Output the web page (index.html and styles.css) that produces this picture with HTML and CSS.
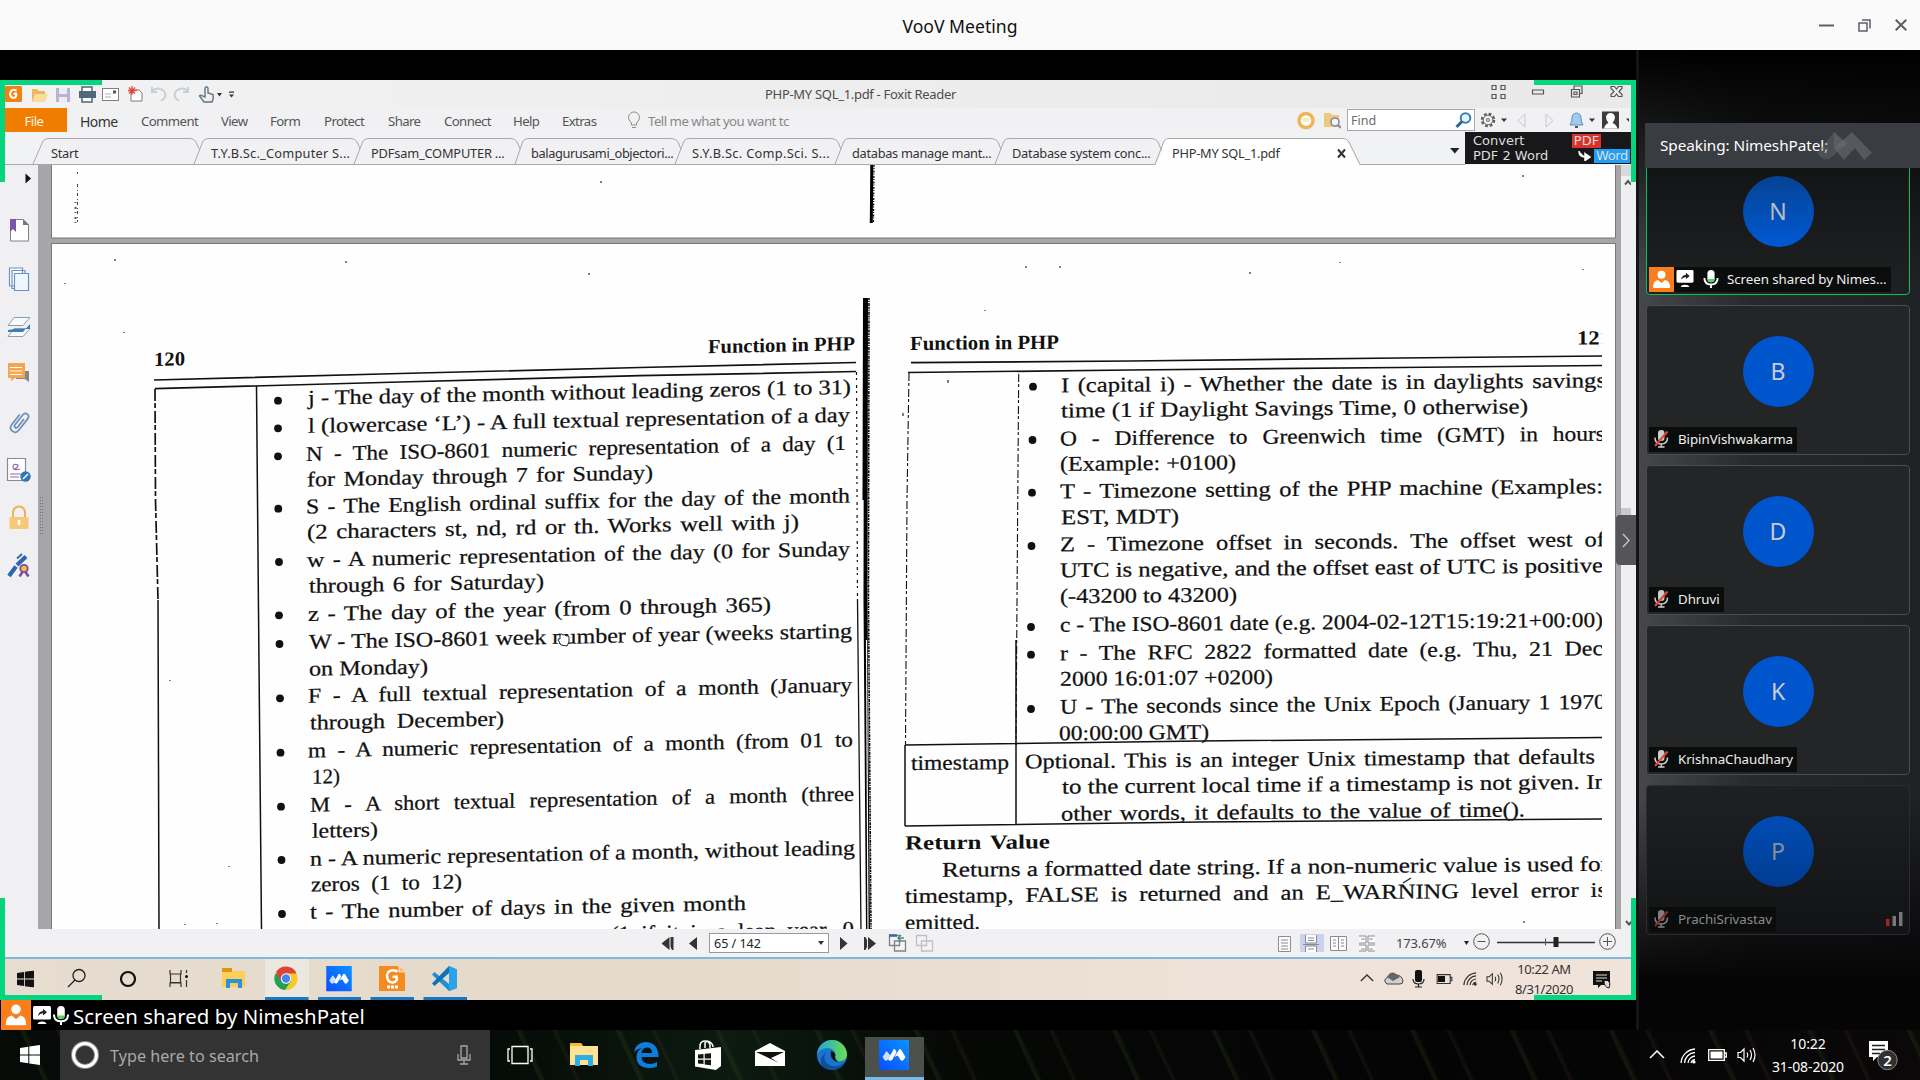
FILE: index.html
```html
<!DOCTYPE html>
<html lang="en">
<head>
<meta charset="utf-8">
<title>VooV Meeting</title>
<link rel="stylesheet" href="styles.css">
</head>
<body>
<svg class="defs" width="0" height="0" aria-hidden="true">
  <defs>
    <linearGradient id="voovBg" x1="0" y1="1" x2="1" y2="0"><stop offset="0" stop-color="#0a4dff"/><stop offset="1" stop-color="#0a93ff"/></linearGradient>
    <linearGradient id="edgeA" x1="0" y1="0" x2="1" y2="0"><stop offset="0" stop-color="#1fa3e0"/><stop offset="1" stop-color="#6ddf4b"/></linearGradient>
    <symbol id="voov" viewBox="0 0 30 30"><rect width="30" height="30" fill="url(#voovBg)"/><path d="M3.500 17 L7.500 11 L11.500 15.500 L8.500 20 Q7 21.500 5.500 20 Z" fill="#fff" opacity=".8"/><path d="M9 19.500 L14.500 9.500 Q15.500 8.500 16.500 10 L17.500 12.500 L13 20 Q11 21.500 9 19.500Z" fill="#fff"/><path d="M15.500 17 L20 9.500 Q21 8.500 22 9.500 L26.500 17 L24.500 20 Q23 21.500 21.500 20 L18.800 15.500Z" fill="#fff"/></symbol>
    <symbol id="person" viewBox="0 0 25 25"><rect width="25" height="25" fill="#fb7d1b"/><circle cx="12.500" cy="7.800" r="4" fill="#fff"/><path d="M4 21 Q4 13.500 9 13 L12.500 16 L16 13 Q21 13.500 21 21Z" fill="#fff"/></symbol>
    <symbol id="share" viewBox="0 0 18 19"><rect y="0" width="18" height="13.500" rx="1.500" fill="#fff"/><path d="M5 10 Q5.500 5.500 10 5 V2.800 L14 6.300 L10 9.500 V7.300 Q7 7.300 5 10Z" fill="#222"/><path d="M4.500 18 Q5 15.500 9 15.500 T13.500 18Z" fill="#fff"/></symbol>
    <symbol id="mic" viewBox="0 0 16 19"><rect x="4.200" y="0" width="7.600" height="13" rx="3.800" fill="#fff"/><path d="M4.200 9.500 H11.800 A3.800 3.500 0 0 1 4.200 9.500Z" fill="#5bd75b"/><path d="M1 8.500 Q1 15.300 8 15.300 T15 8.500 M8 15.300 V19" fill="none" stroke="#fff" stroke-width="2"/></symbol>
    <symbol id="muted" viewBox="0 0 17 18"><rect x="5" y="0" width="6.500" height="11" rx="3.200" fill="#ccc"/><path d="M2 7.500 Q2 14 8.200 14 T14.500 7.500 M8.200 14 V17 M5 17 H11.500" fill="none" stroke="#ccc" stroke-width="1.500"/><path d="M2 16 L14.500 1.500" stroke="#e0463c" stroke-width="2"/></symbol>
    <symbol id="win" viewBox="0 0 20 20"><path d="M0 3 L8.300 1.800 V9.500 H0Z M9.300 1.600 L20 0 V9.500 H9.300Z M0 10.500 H8.300 V18.200 L0 17Z M9.300 10.500 H20 V20 L9.300 18.400Z" fill="currentColor"/></symbol>
    <symbol id="wifi" viewBox="0 0 16 16"><g fill="none" stroke="currentColor" stroke-width="1.300"><path d="M1 15 A15 15 0 0 1 15 1"/><path d="M4.500 15 A11 11 0 0 1 15 4.500"/><path d="M8 15 A8 8 0 0 1 15 8"/><path d="M11 15 A5 5 0 0 1 15 11.500"/></g><circle cx="14" cy="14" r="1.600" fill="currentColor"/></symbol>
    <symbol id="battery" viewBox="0 0 19 12"><path d="M.700 .700 H16.300 V11.300 H.700Z M16.300 4 H18.300 V8 H16.300" fill="none" stroke="currentColor" stroke-width="1.300"/></symbol>
    <symbol id="speaker" viewBox="0 0 20 18"><path d="M1 6.500 H3.500 L7 3 V15 L3.500 11.500 H1Z M10 6.500 Q11.500 9 10 11.500 M13 4 Q16 9 13 14 M16 2 Q20 9 16 16" fill="none" stroke="currentColor" stroke-width="1.200"/></symbol>
    <symbol id="caret" viewBox="0 0 16 9"><path d="M1 8 L8 1 L15 8" fill="none" stroke="currentColor" stroke-width="1.500"/></symbol>
    <symbol id="down" viewBox="0 0 6 4"><path d="M0 0 H6 L3 4Z" fill="#333"/></symbol>
  </defs>
</svg>

<header class="titlebar">
  <h1>VooV Meeting</h1>
  <div class="winbtns">
    <svg width="15" height="15" viewBox="0 0 15 15"><path d="M0 7.500 H15" stroke="#5c6066" stroke-width="2"/></svg>
    <svg width="13" height="13" viewBox="0 0 13 13" fill="none" stroke="#5c6066" stroke-width="1.500"><path d="M1 4 H9 V12 H1Z M4 1 H12 V9.500"/></svg>
    <svg width="12" height="12" viewBox="0 0 12 12"><path d="M.700 .700 L11.300 11.300 M11.300 .700 L.700 11.300" stroke="#5c6066" stroke-width="2"/></svg>
  </div>
</header>

<main class="meeting">
  <section class="stage">
    <div class="shared">
      <div class="foxtitle">
        <svg width="245" height="28" viewBox="0 80 245 28">
          <rect x="5" y="86" width="17" height="16" rx="1" fill="#f08214"/><path d="M16.500 90.500 Q11 88 10 94 Q11 99 15 97.500 Q17 96 16 93.500 L13.500 94" fill="none" stroke="#fff" stroke-width="2"/>
          <path d="M32 89 h5 l2 2 h6 v10 H32Z" fill="#e9b861"/><path d="M35 94 H48 L45 102 H32Z" fill="#fbdc9c"/>
          <path d="M56 88 H70 V102 H56Z" fill="#b9b3cf"/><path d="M59 88 h8 v6 h-8Z M59 97 h8 v5 h-8Z" fill="#eeecf3"/>
          <path d="M82 87 h10 v5 h-10Z M82 96 h10 v6 h-10Z" fill="#fff" stroke="#4e6577" stroke-width="1.500"/><rect x="79" y="91" width="17" height="7" fill="#52677a"/>
          <rect x="102.500" y="88.500" width="16" height="12" fill="#fff" stroke="#7a8288"/><path d="M105 94 h6 M105 97 h6" stroke="#aaa"/><rect x="113" y="90.500" width="3" height="3" fill="#555"/>
          <path d="M133 90 H139 L142 93 V101 H131 V92" fill="#fff" stroke="#7d7d7d"/><path d="M132 86 v9 M128 90.500 h9 M129 87.500 l6 6 M135 87.500 l-6 6" stroke="#e3493c" stroke-width="1.300"/>
          <path d="M152 91 Q158 86 164 91 Q168 97 161 101 M152 87 v5 h5" fill="none" stroke="#c3cfd9" stroke-width="2"/>
          <path d="M188 91 Q182 86 176 91 Q172 97 179 101 M188 87 v5 h-5" fill="none" stroke="#c3cfd9" stroke-width="2"/>
          <path d="M205 97 V88 q1.500-2.500 3 0 V93 l5 1.500 q1 3-1 7.500 H204 L199.500 96 q1-1.500 3 0Z" fill="#eef1f3" stroke="#64727d" stroke-width="1.400"/>
          <path d="M217 93 h5 l-2.500 3.500Z M229 91.500 h5 v1.200 h-5Z M229 94.500 h5 l-2.500 3Z" fill="#333"/>
        </svg>
        <span class="doctitle">PHP-MY SQL_1.pdf - Foxit Reader</span>
        <svg width="134" height="28" viewBox="1490 80 134 28" fill="none" stroke="#555" stroke-width="1.200">
          <path d="M1492 85.500h4v4h-4Z M1501 85.500h4v4h-4Z M1492 94.500h4v4h-4Z M1501 94.500h4v4h-4Z"/>
          <path d="M1532.500 90 h11 v4 h-11Z"/><path d="M1571.500 89.500 h8 v7.500 h-8Z M1574 89 v-3 h8 v7.500 h-2 M1574 92 h3 v2.500 h-3Z"/>
          <path d="M1611 86.500 h3.500 l2 2.500 2-2.500 h3.500 v2 l-3 3 3 3 v2 h-3.500 l-2-2.500 -2 2.500 h-3.500 v-2 l3-3 -3-3Z"/>
        </svg>
      </div>

      <nav class="ribbon">
        <b class="file">File</b><span class="home">Home</span><span>Comment</span><span>View</span><span>Form</span><span>Protect</span><span>Share</span><span>Connect</span><span>Help</span><span>Extras</span>
        <svg width="14" height="18" viewBox="0 0 14 18" fill="none" stroke="#8b8b8b"><path d="M4.500 12 Q1 9 1.500 5.500 Q3 1 7 1 T12.500 5.500 Q13 9 9.500 12 V14 H4.500Z M5 16.500 h4"/></svg>
        <span class="tell">Tell me what you want tc</span>
        <svg width="44" height="20" viewBox="1297 110 44 20"><circle cx="1306" cy="120.500" r="7" fill="#fff" stroke="#edb553" stroke-width="3.500"/><path d="M1302 119h8M1303 121h6" stroke="#f0cf98"/><path d="M1324 113 h6 l2 2 h7 v12 H1324Z" fill="#eec87e"/><circle cx="1335" cy="122" r="4" fill="#f3f3f3" stroke="#848c94" stroke-width="1.600"/><path d="M1338 125 l3 3" stroke="#848c94" stroke-width="2"/></svg>
        <div class="find"><span>Find</span><svg width="17" height="17" viewBox="0 0 17 17"><circle cx="10.500" cy="6" r="4.800" fill="#e8f5fb" stroke="#2f83b5" stroke-width="2"/><path d="M7 9.500 L1.500 15" stroke="#2b6690" stroke-width="3"/></svg></div>
        <svg width="150" height="24" viewBox="1479 108 150 24">
          <circle cx="1488" cy="120" r="6" fill="none" stroke="#5a5a5a" stroke-width="2.500" stroke-dasharray="2.700 2"/><circle cx="1488" cy="120" r="4.800" fill="#f1f1f2" stroke="#666"/><circle cx="1488" cy="120" r="1.500" fill="none" stroke="#666"/>
          <path d="M1501 118.500h6l-3 3.500Z M1589 118.500h6l-3 3.500Z M1626 118.500h6l-3 3.500Z" fill="#333"/>
          <path d="M1525 114 V127 L1518 120.500Z M1546 114 V127 L1553 120.500Z" fill="none" stroke="#c8c8c8"/>
          <path d="M1570 125 Q1572 122 1572 118 Q1572 113.500 1576.500 113 Q1581 113.500 1581 118 Q1581 122 1583 125Z" fill="#9fcbf3" stroke="#5b8fbe"/><path d="M1575 127h3" stroke="#456" stroke-width="2"/>
          <rect x="1602" y="111.500" width="17" height="17" fill="#3c3c3e"/><path d="M1604 128.500 Q1605 124 1608.500 123 Q1606 120 1606 117 Q1607 113 1610.500 113 T1615 117 Q1615 120 1612.500 123 Q1616 124 1617.500 128.500Z" fill="#fff"/>
        </svg>
      </nav>

      <div class="tabs">
        <svg class="tabshapes" width="1465" height="33" viewBox="0 132 1465 33">
          <g fill="#f1f1f3" stroke="#a9a9ac"><path d="M33 164 L43 141 Q45 138.500 48 138.500 H190 Q194 138.500 196 142 L206 164"/><path d="M194 164 L203 141 Q205 138.500 208 138.500 H351 Q355 138.500 357 142 L367 164"/><path d="M354 164 L363 141 Q365 138.500 368 138.500 H511 Q515 138.500 517 142 L527 164"/><path d="M515 164 L523 141 Q525 138.500 528 138.500 H671 Q676 138.500 678 142 L687 164"/><path d="M675 164 L684 141 Q686 138.500 689 138.500 H831 Q836 138.500 838 142 L847 164"/><path d="M835 164 L844 141 Q846 138.500 849 138.500 H991 Q996 138.500 998 142 L1007 164"/><path d="M995 164 L1004 141 Q1006 138.500 1009 138.500 H1152 Q1156 138.500 1158 142 L1167 164"/></g>
          <path d="M0 164.500 H1155 L1164 141 Q1166 138.500 1169 138.500 H1342 Q1347 138.500 1349 142 L1360 164.500 H1465" fill="none" stroke="#a9a9ac"/><path d="M1156 166 L1165 141 Q1167 139 1169 139 H1342 Q1346 139 1348 142 L1359 166Z" fill="#fff"/>
          <path d="M1338 149.500 l7 8 M1345 149.500 l-7 8" stroke="#333" stroke-width="2"/><path d="M1450 148 h9.500 l-4.700 5.500Z" fill="#222"/>
        </svg>
        <span>Start</span><span>T.Y.B.Sc._Computer S...</span><span>PDFsam_COMPUTER ...</span><span>balagurusami_objectori...</span><span>S.Y.B.Sc. Comp.Sci. S...</span><span>databas manage mant...</span><span>Database system conc...</span><span>PHP-MY SQL_1.pdf</span>
        <div class="promo"><div>Convert<br>PDF 2 Word</div><div class="promoR"><em>PDF</em><p><svg width="13" height="10" viewBox="0 0 13 10"><path d="M1 0 Q1 6 7 6 M7 2.500 L12 6 L7 9.500Z" fill="#fff" stroke="#fff" stroke-width="1.500"/></svg><i>Word</i></p></div></div>
      </div>

      <div class="reader">
        <aside class="tools">
          <svg width="38" height="764" viewBox="0 165 38 764">
            <path d="M25.500 173.500 L31 178.500 L25.500 183.500Z" fill="#111"/>
            <path d="M10.500 219.500 H23 L28.500 225 V241 H10.500Z" fill="#fff" stroke="#7f8288"/><path d="M23 219 v6 h6Z" fill="#777"/><path d="M10 219 h6 v13 l-3-3 -3 3Z" fill="#7958a8"/>
            <g fill="#fff" stroke="#6b93c0" stroke-width="1.200"><path d="M9.500 268 h13 v18 h-13Z M12 270.500 h13 v18 h-13Z"/><path d="M14.500 273.500 h14 v17 h-14Z" fill="#eef7ff"/></g>
            <path d="M14 328.500 h16 l-7 8 h-15Z" fill="#f8fbfd" stroke="#8aa0b0"/><path d="M8 330 l7-1 h15 v-5 l-7 8 h-15Z" fill="#3f7db3"/><path d="M14 317.500 h16 l-7 8 h-15Z" fill="#f8fbfd" stroke="#8aa0b0"/>
            <path d="M24 371 h5 v11 l-4-3 h-9 v-3 h9Z" fill="#85858a"/><path d="M8 363 h17 v15 h-10 l-4 3 v-3 h-3Z" fill="#f5a64e"/><path d="M10 367.500 h12 M10 371 h12 M10 374.500 h12" stroke="#fff"/>
            <g transform="rotate(38 19.500 422)" fill="none" stroke="#6b8fb8" stroke-width="1.700"><path d="M15 416 V429 Q15 433.500 19.500 433.500 T24 429 V414.500 Q24 411 20.800 411 T17.700 414.500 V427 Q17.700 429 19.500 429 T21.200 427 V417"/></g>
            <path d="M7.500 458.500 h18 v22 h-18Z" fill="#fff" stroke="#8b8b8f" stroke-width="1.200"/><path d="M14 469 q4-1 4-4 q-5-2-5 2 q0 4 7 2 M10 474h11 M10 477h9" fill="none" stroke="#8c6fae" stroke-width="1.200"/><circle cx="25.500" cy="476.500" r="5.200" fill="#2f78b4"/><path d="M23 479 l5-5" stroke="#fff" stroke-width="1.500"/>
            <path d="M13 518 v-6 q1-5.500 6-5.500 t6 5.500 v6" fill="none" stroke="#eab45e" stroke-width="2"/><path d="M9.500 517 h19 v12 h-19Z" fill="#f7c877"/><path d="M19 520 v5" stroke="#fff" stroke-width="2.500"/>
            <path d="M9 576 L16 566.500 M17 565 L26 556.500" stroke="#2d65b0" stroke-width="4.200"/><path d="M17 558.500 l5-4.500" stroke="#2d65b0" stroke-width="1.800"/><path d="M22.500 572 l-3 4.500 M25.500 572 l3 4.500" stroke="#7b4aa0" stroke-width="2.500"/><circle cx="24" cy="568.500" r="3.700" fill="#f3c33c" stroke="#7b4aa0" stroke-width="1.800"/>
          </svg>
        </aside>
        <svg class="scan" width="1583" height="764" viewBox="38 165 1583 764">
          <defs><clipPath id="cut"><rect x="860" y="165" width="742" height="764"/></clipPath></defs>
          <rect x="38" y="165" width="1583" height="764" fill="#a6a6a8"/>
          <rect x="52" y="165" width="1563" height="73" fill="#fefefe"/><rect x="52" y="244" width="1563" height="685" fill="#fefefe"/>
          <path d="M51.500 165 V238 H1615.500 V165 M51.500 929 V243.500 H1615.500 V929" fill="none" stroke="#77777a"/>
          <path d="M42.500 497 v37 M40.500 497 v37" stroke="#77777a" stroke-dasharray="1 2"/>
          <path d="M77.500 172v2M77.500 184 V222" stroke="#444" stroke-dasharray="3 3 1 2"/><path d="M75.500 202 V223" stroke="#555" stroke-width="2" stroke-dasharray="1 4 2 3"/>
          <path d="M871.800 165 L871.300 223" stroke="#000" stroke-width="3"/><path d="M874 165 L873.500 223" stroke="#000" stroke-width="1.200" stroke-dasharray="2 1 1 1.500"/>
          <path d="M866 298 L865.500 600 L868 929" fill="none" stroke="#000" stroke-width="4"/><path d="M864.500 298 L864 500" stroke="#000" stroke-width="3"/><path d="M869 298 L868.500 600 L871 929" fill="none" stroke="#000" stroke-width="1.500" stroke-dasharray="2 .7 1.300 1 3 .8"/>
          <path d="M866.500 640 L868 929" stroke="#fff" stroke-width="1.200"/>
          <g fill="none" stroke="#111" stroke-width="1.700">
            <path d="M154 380 L400 373.500 L640 367.500 L856 362.500 M155 388.700 L400 382 L640 375.700 L856 371.500"/>
            <path d="M911 362.700 L1130 361 L1400 358 L1602 356 M908 372.500 L1130 370 L1400 367.500 L1602 365.500"/>
            <path d="M905 745 L1200 741 L1602 737.500 M905 826 L1200 822 L1602 819" stroke-width="1.500"/>
            <path d="M256.500 386 L258.500 610 L261.500 929 M158 600 L159 929 M905 745 V826 M1016 640 V825" stroke-width="1.500"/>
            <path d="M155 389 L155.500 500 L158 600" stroke-dasharray="12 2 5 3"/>
            <path d="M856.500 372 L857.500 600" stroke-width="1.200" stroke-dasharray="3 3 2 5"/><path d="M857.500 600 L861 929" stroke-width="1.300"/>
            <path d="M909 373 L907 500 L905.500 745 M1018.700 374 L1017 600 L1016 745" stroke-width="1.100" stroke-dasharray="8 2 3 3"/>
          </g>
          <path d="M115 259v2M346 261v2M601 181v2M589 273v2M65 283v1M124 332v1M1523 175v2M1026 266v2M1250 272v2M1060 266v2M903 413v3M948 380v3M185 924v1M217 923v1M170 680v1M229 866v1M1524 921v2M985 310v1M1340 262v1M1583 269v1" stroke="#555" stroke-width="1.500"/>
          <g fill="#111"><circle cx="278" cy="400.700" r="3.900"/><circle cx="278" cy="428.300" r="3.900"/><circle cx="278" cy="456.300" r="3.900"/><circle cx="278.300" cy="508.700" r="3.900"/><circle cx="279" cy="562" r="3.900"/><circle cx="279" cy="615.300" r="3.900"/><circle cx="279.500" cy="644" r="3.900"/><circle cx="280" cy="698.300" r="3.900"/><circle cx="280.500" cy="752.700" r="3.900"/><circle cx="281" cy="806.700" r="3.900"/><circle cx="281.500" cy="860" r="3.900"/><circle cx="282" cy="914" r="3.900"/>
          <circle cx="1033" cy="386.700" r="3.900"/><circle cx="1032.500" cy="440" r="3.900"/><circle cx="1032" cy="492.700" r="3.900"/><circle cx="1031.500" cy="546" r="3.900"/><circle cx="1031" cy="627" r="3.900"/><circle cx="1031" cy="654.700" r="3.900"/><circle cx="1031" cy="709" r="3.900"/></g>
          <g class="print" transform="matrix(1 -.0205 0 1 0 7.200)">
            <text class="hd" x="154" y="362" textLength="31" lengthAdjust="spacingAndGlyphs">120</text>
            <text class="hd" x="708" y="360.500" textLength="147" lengthAdjust="spacingAndGlyphs">Function in PHP</text>
            <text x="308" y="404" textLength="543" lengthAdjust="spacingAndGlyphs">j - The day of the month without leading zeros (1 to 31)</text>
            <text x="308" y="432" textLength="542" lengthAdjust="spacingAndGlyphs">l (lowercase ‘L’) - A full textual representation of a day</text>
            <text class="w6" x="306" y="460" textLength="540" lengthAdjust="spacingAndGlyphs">N - The ISO-8601 numeric representation of a day (1</text>
            <text class="w3" x="307" y="485.500" textLength="346" lengthAdjust="spacingAndGlyphs">for Monday through 7 for Sunday)</text>
            <text class="w3" x="306" y="512.700" textLength="544" lengthAdjust="spacingAndGlyphs">S - The English ordinal suffix for the day of the month</text>
            <text class="w3" x="307" y="538" textLength="492" lengthAdjust="spacingAndGlyphs">(2 characters st, nd, rd or th. Works well with j)</text>
            <text class="w3" x="307" y="566" textLength="543" lengthAdjust="spacingAndGlyphs">w - A numeric representation of the day (0 for Sunday</text>
            <text class="w3" x="309" y="592" textLength="235" lengthAdjust="spacingAndGlyphs">through 6 for Saturday)</text>
            <text class="w3" x="308" y="620" textLength="463" lengthAdjust="spacingAndGlyphs">z - The day of the year (from 0 through 365)</text>
            <text x="309" y="648" textLength="543" lengthAdjust="spacingAndGlyphs">W - The ISO-8601 week number of year (weeks starting</text>
            <text x="309" y="675" textLength="119" lengthAdjust="spacingAndGlyphs">on Monday)</text>
            <text class="w6" x="308" y="702" textLength="544" lengthAdjust="spacingAndGlyphs">F - A full textual representation of a month (January</text>
            <text class="w6" x="310" y="728.700" textLength="194" lengthAdjust="spacingAndGlyphs">through December)</text>
            <text class="w6" x="308" y="756.700" textLength="545" lengthAdjust="spacingAndGlyphs">m - A numeric representation of a month (from 01 to</text>
            <text x="312" y="783" textLength="28" lengthAdjust="spacingAndGlyphs">12)</text>
            <text class="w9" x="310" y="811" textLength="544" lengthAdjust="spacingAndGlyphs">M - A short textual representation of a month (three</text>
            <text x="312" y="837" textLength="66" lengthAdjust="spacingAndGlyphs">letters)</text>
            <text x="310" y="865" textLength="545" lengthAdjust="spacingAndGlyphs">n - A numeric representation of a month, without leading</text>
            <text class="w6" x="311" y="890.700" textLength="151" lengthAdjust="spacingAndGlyphs">zeros (1 to 12)</text>
            <text class="w3" x="310" y="918" textLength="436" lengthAdjust="spacingAndGlyphs">t - The number of days in the given month</text>
            <text class="w6" x="611" y="946" textLength="243" lengthAdjust="spacingAndGlyphs">(1 if it is a leap year, 0</text>
          </g>
          <g clip-path="url(#cut)"><g class="print" transform="matrix(1 -.009 0 1 0 9.700)">
            <text class="hd" x="910" y="348.500" textLength="149" lengthAdjust="spacingAndGlyphs">Function in PHP</text>
            <text class="hd" x="1577" y="349" textLength="34" lengthAdjust="spacingAndGlyphs">121</text>
            <text class="w3" x="1061" y="392" textLength="545" lengthAdjust="spacingAndGlyphs">I (capital i) - Whether the date is in daylights savings</text>
            <text x="1061" y="417.300" textLength="467" lengthAdjust="spacingAndGlyphs">time (1 if Daylight Savings Time, 0 otherwise)</text>
            <text class="w9" x="1060" y="445.300" textLength="545" lengthAdjust="spacingAndGlyphs">O - Difference to Greenwich time (GMT) in hours</text>
            <text x="1060" y="470.700" textLength="176" lengthAdjust="spacingAndGlyphs">(Example: +0100)</text>
            <text class="w3" x="1060" y="498" textLength="543" lengthAdjust="spacingAndGlyphs">T - Timezone setting of the PHP machine (Examples:</text>
            <text x="1061" y="524" textLength="118" lengthAdjust="spacingAndGlyphs">EST, MDT)</text>
            <text class="w6" x="1060" y="551" textLength="545" lengthAdjust="spacingAndGlyphs">Z - Timezone offset in seconds. The offset west of</text>
            <text x="1060" y="577" textLength="543" lengthAdjust="spacingAndGlyphs">UTC is negative, and the offset east of UTC is positive</text>
            <text x="1060" y="603" textLength="177" lengthAdjust="spacingAndGlyphs">(-43200 to 43200)</text>
            <text x="1060" y="631.500" textLength="543" lengthAdjust="spacingAndGlyphs">c - The ISO-8601 date (e.g. 2004-02-12T15:19:21+00:00)</text>
            <text class="w6" x="1060" y="660" textLength="543" lengthAdjust="spacingAndGlyphs">r - The RFC 2822 formatted date (e.g. Thu, 21 Dec</text>
            <text x="1060" y="685.700" textLength="213" lengthAdjust="spacingAndGlyphs">2000 16:01:07 +0200)</text>
            <text class="w3" x="1060" y="713.500" textLength="546" lengthAdjust="spacingAndGlyphs">U - The seconds since the Unix Epoch (January 1 1970</text>
            <text x="1059" y="740" textLength="150" lengthAdjust="spacingAndGlyphs">00:00:00 GMT)</text>
            <text x="911" y="768.500" textLength="98" lengthAdjust="spacingAndGlyphs">timestamp</text>
            <text class="w3" x="1025" y="768" textLength="570" lengthAdjust="spacingAndGlyphs">Optional. This is an integer Unix timestamp that defaults</text>
            <text x="1062" y="793.500" textLength="545" lengthAdjust="spacingAndGlyphs">to the current local time if a timestamp is not given. In</text>
            <text class="w3" x="1061" y="820.500" textLength="464" lengthAdjust="spacingAndGlyphs">other words, it defaults to the value of time().</text>
            <text class="hd w3" x="905" y="848" textLength="145" lengthAdjust="spacingAndGlyphs">Return Value</text>
            <text x="942" y="875.500" textLength="667" lengthAdjust="spacingAndGlyphs">Returns a formatted date string. If a non-numeric value is used for</text>
            <text class="w6" x="905" y="901.500" textLength="702" lengthAdjust="spacingAndGlyphs">timestamp, FALSE is returned and an E_WARNING level error is</text>
            <text x="905" y="928" textLength="75" lengthAdjust="spacingAndGlyphs">emitted.</text>
          </g></g>
          <path d="M1403 883 l8-5" stroke="#222" stroke-width="1.300"/>
          <path d="M561 645 l-3-5 q0-2 2-1 v-4 q2-2 3 0 q2-1 3 1 q3-1 3 1 v5 l-2 4Z" fill="#fff" stroke="#222" stroke-width="1"/>
        </svg>
        <div class="scroll"><svg width="10" height="764" viewBox="0 165 10 764"><rect width="10" height="11" y="165" fill="#d7d9dc"/><rect y="508" width="10" height="56" fill="#c9cacc"/><path d="M4 184.500 l3-3.500 3 3.500 M5 921 l3 3.500 3-3.500" fill="none" stroke="#555" stroke-width="2"/></svg></div>
      </div>

      <div class="status">
        <svg width="45" height="28" viewBox="657 929 45 28" fill="#333"><path d="M669.500 937 V950 L661.500 943.500Z M670.500 937h3v13h-1.500l-1.500-3Z M697 937 V950 L689 943.500Z"/></svg>
        <div class="pagebox"><span>65 / 142</span><svg width="6" height="4"><use href="#down"/></svg></div>
        <svg width="110" height="28" viewBox="831 929 110 28"><path d="M840 937 V950 L847.500 943.500Z M864 937h1.500l1.500 3v7l-1.500 3H864Z M868 937 V950 L876 943.500Z" fill="#333"/><g fill="#f3f3f5" stroke="#7d8288" stroke-width="1.300"><path d="M889.500 935.500h10v10h-10Z M894.500 941h11v10h-11Z"/><path stroke="#c0c0c4" d="M916.500 935.500h10v10h-10Z M921.500 941h11v10h-11Z"/></g><path d="M889 935.500h8" stroke="#3869a8" stroke-width="2.500"/><path d="M898 938h6m-3-3l-3 3 3 3" stroke="#4e8a86" fill="none" stroke-width="1.500"/></svg>
        <svg class="views" width="105" height="28" viewBox="1275 929 105 28" fill="#fdfdfd" stroke="#888c91"><rect x="1300" y="934" width="24" height="18" fill="#cdd1f0" stroke="none"/><path d="M1278.500 936.500h12v15h-12Z"/><path d="M1281 940h7M1281 943h7M1281 946h7M1281 949h7"/><path d="M1305.500 935v8h11v-8 M1305.500 952v-6h11v6 M1303 944.500h16 M1308 938h6 M1308 940.500h6 M1308 949h6"/><path d="M1330.500 936.500h8v14h-8Z M1338.500 936.500h8v14h-8Z M1333 940h3M1333 943h3M1333 946h3M1341 940h3M1341 943h3M1341 946h3"/><path d="M1359 936h7v7h-7 M1375 936h-7v7h7 M1359 951h7v-6h-7 M1375 951h-7v-6h7 M1361 939h4M1361 949h4M1369 939h4M1369 949h4"/></svg>
        <span class="zoomv">173.67%</span>
        <svg width="160" height="28" viewBox="1463 929 160 28" fill="none" stroke="#555"><path d="M1464 941h5l-2.500 4Z" fill="#222" stroke="none"/><circle cx="1481.500" cy="941.500" r="7.800"/><path d="M1477.500 941.500h8 M1603 941.500h9 M1607.500 937v9"/><circle cx="1607.500" cy="941.500" r="7.800"/><path d="M1497 942.500h98" stroke="#333" stroke-width="1.300"/><path d="M1545.500 938.500v7"/><rect x="1553.500" y="937" width="5" height="10" fill="#222" stroke="none"/></svg>
      </div>

      <div class="innerbar">
        <svg width="480" height="41" viewBox="0 959 480 41">
          <g color="#111"><use href="#win" x="17" y="970.500" width="17" height="17"/></g>
          <circle cx="79" cy="975.500" r="6" fill="none" stroke="#222" stroke-width="1.300"/><path d="M75 980 l-7 7" stroke="#222" stroke-width="1.300"/>
          <circle cx="128" cy="979" r="7" fill="none" stroke="#111" stroke-width="2.200"/>
          <path d="M170 970v4h11v-4 M170 987v-4h11v4 M170.500 974.500v8h10v-8 M186.500 970v3 M186.500 980v7" fill="none" stroke="#333" stroke-width="1.200"/><circle cx="186.500" cy="976.500" r="1.500" fill="#111"/>
          <path d="M222 969h9l2 2h12v16h-23Z" fill="#fccf58"/><path d="M222 968h10v4h-10Z" fill="#d9980f"/><path d="M226 979h16v9h-4v-5h-8v5h-4Z" fill="#2f8fdc"/>
          <rect x="265" y="959" width="44" height="38" fill="#ece7df"/>
          <circle cx="286" cy="978.500" r="11.500" fill="#f7c928"/><path d="M275.500 973.500 A11.500 11.500 0 0 0 285 990 L291 981Z" fill="#22a05b"/><path d="M276 972 A11.500 11.500 0 0 1 296.500 973.500 H286 L281 981Z" fill="#dd4437"/><circle cx="286" cy="978.500" r="5.200" fill="#fff"/><circle cx="286" cy="978.500" r="4.200" fill="#4484f3"/>
          <use href="#voov" x="326" y="966" width="26" height="25.500"/>
          <path d="M379 966h19l7 6v19h-26Z" fill="#f58a1f"/><path d="M399 966v6h6" fill="#f7b878" stroke="#fff" stroke-width=".700"/><path d="M397.500 971.500 Q389 968 387 975 Q387 983 393.500 982.500 Q398 981 396.500 976.500 L392.500 977" fill="none" stroke="#fff" stroke-width="2.500"/><path d="M387 987h11" stroke="#fff" stroke-width="3" stroke-dasharray="3 1"/>
          <path d="M449 966 L457 969.500 V988 L449 991 L434 976.500 L432 974.500 L434.500 972 L449 984Z" fill="#1f8fd4"/><path d="M449 966 V973 L434.500 986 L432 983.500Z" fill="#0d72b8"/><path d="M449 966 l8 3.500 V988 l-8 3Z" fill="#2aa3e8"/>
          <path d="M265 998.500h43.500M318 998.500h43M370.500 998.500h43.500M423.500 998.500h43.500" stroke="#1977c4" stroke-width="3"/>
        </svg>
        <div class="innertray">
          <svg width="150" height="41" viewBox="1358 959 150 41" color="#333"><use href="#caret" x="1360" y="974" width="14" height="8"/><path d="M1387 984 q-5-4 1-7 q3-6 8-2 q6 0 7 6 q0 3-3 3Z" fill="#cfcfd2" stroke="#444"/><path d="M1387 977 q4-7 9-3 l4 3 -7 4Z" fill="#666"/><rect x="1415" y="970" width="7" height="12" rx="2" fill="#111"/><path d="M1413 979q0 5 5.500 5t5.500-5M1418.500 984v3M1415 987h7" fill="none" stroke="#222" stroke-width="1.200"/><use href="#battery" x="1436" y="974" width="17" height="10"/><rect x="1438" y="976" width="7" height="6" fill="#111"/><use href="#wifi" x="1463" y="972" width="14" height="14"/><use href="#speaker" x="1486" y="971" width="18" height="16"/></svg>
          <time>10:22 AM<br>8/31/2020</time>
          <svg width="20" height="20" viewBox="0 0 20 20"><path d="M1 1h17v14h-9l-3 3v-3H1Z" fill="#111"/><path d="M4 5h11M4 8h11M4 11h6" stroke="#e6dccd"/><path d="M12 11q0 6 5 7q2-6-1-7" fill="#ddd" stroke="#111"/></svg>
        </div>
      </div>

      <i class="edge tl"></i><i class="edge tr"></i><i class="edge bl"></i><i class="edge br"></i>
      <button class="collapse" aria-label="Collapse panel"><svg width="8" height="15" viewBox="0 0 8 15"><path d="M1 1 L7 7.500 L1 14" fill="none" stroke="#c8c8c8" stroke-width="1.300"/></svg></button>
    </div>
    <div class="caption"><svg width="30" height="30"><use href="#person"/></svg><svg width="18" height="19"><use href="#share"/></svg><svg width="16" height="19"><use href="#mic"/></svg><span>Screen shared by NimeshPatel</span></div>
  </section>

  <aside class="people">
    <div class="speaking">Speaking: NimeshPatel;
      <svg class="ghost" width="56" height="30" viewBox="0 0 56 30"><path d="M0 22 L17 1 L31 12 L16 25 Q8 33 0 22Z" fill="#6a6d70" opacity=".4"/><path d="M17 1 L29 14 L17 16Z" fill="#75787c" opacity=".35"/><path d="M17 17 L35 1 L55 22 L47 29 L38 17 L27 29 Z" fill="#6d7075" opacity=".55"/></svg>
    </div>
    <article class="tile live"><b>N</b><footer><svg width="25" height="25"><use href="#person"/></svg><svg width="18" height="18"><use href="#share"/></svg><svg width="16" height="18"><use href="#mic"/></svg><span>Screen shared by Nimes...</span></footer></article>
    <article class="tile"><b>B</b><footer class="m"><svg width="17" height="18"><use href="#muted"/></svg><span>BipinVishwakarma</span></footer></article>
    <article class="tile"><b>D</b><footer class="m"><svg width="17" height="18"><use href="#muted"/></svg><span>Dhruvi</span></footer></article>
    <article class="tile"><b>K</b><footer class="m"><svg width="17" height="18"><use href="#muted"/></svg><span>KrishnaChaudhary</span></footer></article>
    <article class="tile dim"><b>P</b><footer class="m"><svg width="17" height="18"><use href="#muted"/></svg><span>PrachiSrivastav</span></footer><svg class="signal" width="17" height="14" viewBox="0 0 17 14"><rect y="7" width="3.500" height="7" fill="#a5231c"/><rect x="6.500" y="4" width="3.500" height="10" fill="#777"/><rect x="13" width="3.500" height="14" fill="#777"/></svg></article>
  </aside>
</main>

<footer class="taskbar">
  <svg class="start" width="20" height="20"><use href="#win"/></svg>
  <div class="search"><svg width="28" height="28" viewBox="0 0 28 28"><circle cx="14" cy="14" r="11.500" fill="none" stroke="#8b8b8b" stroke-width="5"/><circle cx="14" cy="14" r="11.500" fill="none" stroke="#fff" stroke-width="3"/></svg><span>Type here to search</span><svg width="14" height="20" viewBox="0 0 14 20" fill="none" stroke="#a9a9a9" stroke-width="1.300"><path d="M4 1h6v12H4Z M1 9v6h12V9 M7 15v4 M3 19h8"/></svg></div>
  <svg class="apps" width="434" height="50" viewBox="490 1030 434 50">
    <path d="M512 1046.500h16v17h-16Z M510 1049h-2v12h2 M530 1049h2v12h-2" fill="none" stroke="#fff" stroke-width="1.300"/>
    <path d="M570 1043h11l2 3h15v19h-28Z" fill="#ffe395"/><path d="M570 1043h11l2 3h-13Z" fill="#f5bd2e"/><path d="M575 1055h18v11h-5v-6h-8v6h-5Z" fill="#2faee4"/>
    <path d="M633.500 1053 Q636 1042 646 1042 Q658.500 1043 658.500 1057 H641.500 Q642 1064 650 1064 Q654 1064 657 1062 V1066.500 Q653 1068.500 648 1068 Q636 1067 636.500 1056 Q637 1050 642.500 1048 Q636 1049 633.500 1053Z M641.500 1053 H652 Q652 1047.500 647 1047.500 Q642 1048 641.500 1053Z" fill="#0f7ddb" fill-rule="evenodd"/>
    <path d="M695 1050 L721 1047 V1066 L716 1070 L695 1066.500Z" fill="#fff"/><path d="M700 1049v-4q1-4 5-4t5 4v3 M705 1048v-5q2-3 5-1t3 5" fill="none" stroke="#fff" stroke-width="1.500"/><path d="M698 1054.500l5.500-.5v4.500h-5.500Z M704.700 1053.800l6.300-.6v5.300h-6.300Z M698 1059.700h5.500v4.300l-5.500-.5Z M704.700 1059.700h6.300v5.500l-6.300-.8Z" fill="#10180f"/>
    <path d="M755 1051 L770 1043 L785 1051 V1066 H755Z" fill="#fff"/><path d="M757 1052 H784 L771 1058 L779 1063 L756 1052Z" fill="#0c120d"/>
    <circle cx="832" cy="1055" r="15" fill="#1c73cd"/><path d="M817 1055 A15 15 0 0 1 847 1055 Q846 1062 838 1061 Q833 1060 835 1056 Q836 1049 828 1048 Q820 1048 817 1055Z" fill="url(#edgeA)"/><path d="M826 1052 Q821 1062 832 1066 Q840 1067 845 1062 Q841 1070 832 1070 Q819 1069 821 1058Z" fill="#0d4f9b"/><path d="M831 1051 Q829 1060 838 1062 Q834 1058 835.500 1055 Q835 1052 831 1051Z" fill="#07160d"/>
    <rect x="865" y="1037" width="59" height="43" fill="#4b504a"/><rect x="865" y="1077" width="59" height="3" fill="#76b9ed"/><use href="#voov" x="879" y="1040" width="30" height="30"/>
  </svg>
  <svg class="tray" width="116" height="50" viewBox="1645 1030 116 50"><use href="#caret" x="1649" y="1050" width="16" height="9"/><use href="#wifi" x="1680" y="1048" width="16" height="16"/><use href="#battery" x="1708" y="1049" width="19" height="12"/><rect x="1710.500" y="1051.500" width="12" height="7" fill="#fff"/><use href="#speaker" x="1736" y="1046" width="22" height="18"/></svg>
  <time>10:22<br>31-08-2020</time>
  <svg class="notif" width="30" height="32" viewBox="0 0 30 32"><path d="M1 2h19v16H9l-4 4v-4H1Z" fill="#fff"/><path d="M4 6.500h13M4 10.500h13M4 14.500h8" stroke="#222" stroke-width="1.300"/><circle cx="19.500" cy="21" r="9.700" fill="#303030" stroke="#888"/><text x="19.500" y="26.500">2</text></svg>
</footer>
</body>
</html>
```
FILE: styles.css
```css
* { box-sizing: border-box; }
body { margin: 0; width: 1920px; height: 1080px; overflow: hidden; background: #000; font-family: "Noto Sans", sans-serif; display: flex; flex-direction: column; }
svg { display: block; flex: none; }
.defs { position: absolute; }
p { margin: 0; }

.titlebar { height: 50px; flex: none; background: #fafafa; display: grid; grid-template-columns: 1fr auto 1fr; align-items: center; }
.titlebar h1 { grid-column: 2; margin: 0; padding-top: 1px; font-size: 17.6px; line-height: 24px; font-weight: 400; color: #111; }
.winbtns { justify-self: end; display: flex; align-items: center; gap: 24px; padding-right: 13px; }

.meeting { flex: none; height: 980px; display: flex; }
.stage { width: 1639px; padding-top: 30px; flex: none; border-right: 3px solid #141416; background: #000; }
.shared { position: relative; width: 1636px; height: 920px; background: #f0f0f2; overflow: hidden; display: flex; flex-direction: column; }
.shared > * { flex: none; }

.foxtitle { height: 28px; display: grid; grid-template-columns: 765px 725px 134px; background: linear-gradient(90deg, #f2f2f2, #e9e9ea); }
.doctitle { font-size: 13px; line-height: 28px; color: #4c4c4c; letter-spacing: -.3px; white-space: nowrap; }

.ribbon { height: 24px; display: grid; grid-template-columns: 4px 76px 61px 80px 49px 54px 64px 56px 69px 49px 65px 21px 649px 50px 132px 1fr; align-items: center; font-size: 13.2px; color: #555; white-space: nowrap; background: #f1f1f3; }
.ribbon > span { letter-spacing: -.6px; padding-top: 2px; }
.ribbon .file { grid-column: 2; width: 63px; height: 24px; line-height: 27px; padding-right: 3px; text-align: center; font-weight: 400; letter-spacing: -.5px; background: #ee7d00; color: #fff3e4; }
.ribbon .home { color: #333; font-size: 14px; letter-spacing: -.6px; }
.ribbon .tell { color: #888; letter-spacing: -.5px; }
.find { width: 128px; height: 22px; background: #fff; border: 1px solid #a8a8ac; display: flex; align-items: center; justify-content: space-between; padding: 0 2px 0 3px; font-size: 12.5px; color: #6b6b6b; }

.tabs { height: 33px; display: grid; grid-template-columns: 51px 160px 160px 160px 161px 160px 160px 160px 293px 166px; grid-template-rows: 33px; font-size: 12.8px; color: #333; white-space: nowrap; background: #f1f2f3; }
.tabs span { grid-row: 1; line-height: 43px; letter-spacing: -.3px; }
.tabshapes { grid-row: 1; grid-column: 1 / 10; }
.tabs span:nth-of-type(1) { grid-column: 2; }
.tabs span:nth-of-type(2) { grid-column: 3; letter-spacing: .22px; }
.tabs span:nth-of-type(3) { grid-column: 4; letter-spacing: -.18px; }
.tabs span:nth-of-type(4) { grid-column: 5; letter-spacing: -.4px; }
.tabs span:nth-of-type(5) { grid-column: 6; letter-spacing: .3px; }
.tabs span:nth-of-type(6) { grid-column: 7; }
.tabs span:nth-of-type(7) { grid-column: 8; letter-spacing: -.25px; }
.tabs span:nth-of-type(8) { grid-column: 9; letter-spacing: -.25px; }
.promo { grid-column: 10; grid-row: 1; height: 32px; background: #18181a; color: #ddd; display: flex; justify-content: space-between; padding: 2px 1px 0 8px; font: 13px/14.5px "DejaVu Sans", sans-serif; }
.promo em, .promo i { display: block; font-style: normal; }
.promo em { background: #d8322b; width: 29px; height: 14px; text-align: center; }
.promoR p { display: flex; gap: 3px; margin: 1px 0 0 6px; align-items: center; }
.promo i { background: #1f9ff5; height: 14px; width: 36px; text-align: center; letter-spacing: -.4px; }

.reader { height: 764px; display: flex; }
.tools { width: 38px; background: #f0f0f2; }
.scroll { background: #eeeff1; flex: 1; }
.print text { font-family: "Liberation Serif", serif; font-size: 21px; fill: #111; stroke: #111; stroke-width: .25px; }
.print .hd { font-weight: 700; font-size: 20px; stroke: none; }
.print .w3 { word-spacing: 2px; }
.print .w6 { word-spacing: 5px; }
.print .w9 { word-spacing: 8px; }

.status { height: 30px; display: flex; padding-left: 657px; background: #f1f1f3; border-bottom: 2px solid #7fb9d9; }
.pagebox { margin: 4px 2px 0 7px; width: 120px; height: 20px; background: #fff; border: 1px solid #9a9a9e; display: flex; align-items: center; justify-content: space-between; padding: 0 4px; font-size: 12.5px; color: #222; }
.views { margin-left: 334px; }
.zoomv { width: 67px; margin-left: 16px; font-size: 13px; letter-spacing: -.15px; line-height: 28px; color: #444; }

.innerbar { height: 41px; display: flex; justify-content: space-between; background: linear-gradient(90deg, #e6ddd0, #e4dacb 40%, #efe2d8 75%, #f0e4da); }
.innertray { display: flex; align-items: center; width: 278px; }
.innertray time { width: 80px; margin: 0 5px 0 -4px; text-align: center; font-size: 13px; line-height: 19.500px; letter-spacing: -.4px; color: #333; }
.innertray > svg:last-child { margin-left: 3px; }

.edge { position: absolute; width: 102px; height: 102px; border: 0 solid #06d580; }
.tl { top: 0; left: 0; border-width: 5px 0 0 5px; }
.tr { top: 0; right: 0; border-width: 5px 5px 0 0; }
.bl { bottom: 0; left: 0; border-width: 0 0 5px 5px; }
.br { bottom: 0; right: 0; border-width: 0 5px 5px 0; }
.collapse { position: absolute; right: 0; top: 435px; width: 20px; height: 50px; border: 0; padding: 0 0 0 6px; border-radius: 4px 0 0 4px; background: #555557; display: flex; align-items: center; }

.caption { height: 30px; display: flex; align-items: center; gap: 2px; color: #fff; font-size: 20.4px; line-height: 30px; letter-spacing: .05px; white-space: nowrap; padding-left: 1px; }
.caption span { margin-left: 2px; padding-top: 2px; }

.people { position: relative; flex: 1; padding: 95px 10px 0 7px; display: flex; flex-direction: column; gap: 10.500px; background: linear-gradient(#000 0, transparent 24%, transparent 76%, #050506 95%), linear-gradient(90deg, #45474b, #28292c 40%, #202124); }
.speaking { position: absolute; left: 6px; top: 73px; width: 275px; height: 45px; padding-left: 15px; background: #393c41; color: #fff; font-size: 15.3px; line-height: 45px; z-index: 1; letter-spacing: -.05px; }
.ghost { position: absolute; left: 172px; top: 8px; }
.tile { position: relative; flex: none; height: 149.500px; border: 1px solid #4c4d50; border-radius: 4px; background: #242527; display: flex; flex-direction: column; align-items: center; justify-content: space-between; padding: 30px 2px 2px; }
.tile.live { border-color: #0abf5b; background: linear-gradient(#101214, #202123); }
.tile.dim { background: linear-gradient(#1f2022, #121315); border-color: #2b2c2e; }
.tile b { width: 71px; height: 71px; border-radius: 50%; background: #0055cc; color: #c9ccd2; font-size: 23px; font-weight: 400; line-height: 71px; text-align: center; }
.tile.live b { background: linear-gradient(#054393, #0059d4); color: #b9bcc2; }
.tile.dim b { background: linear-gradient(#004cb4, #003c92); color: #8b8f96; }
.tile footer { align-self: flex-start; height: 25px; background: #0b0c0c; display: flex; align-items: center; gap: 2px; padding-right: 5px; color: #eee; font-size: 13.3px; letter-spacing: -.05px; }
.tile footer svg + span { margin-left: 6px; }
.live footer svg:nth-child(3) { margin-left: 7px; }
.tile footer.m { padding: 0 4px; }
.tile.dim footer { color: #8a8a8a; }
.dim footer svg { opacity: .6; }
.signal { position: absolute; right: 6px; bottom: 8px; }

.taskbar { flex: none; height: 50px; display: flex; align-items: center; color: #fff; background:
  repeating-linear-gradient(65deg, transparent 0 38px, rgba(60,90,40,.2) 40px 42px, transparent 45px 71px, rgba(90,60,40,.18) 73px 74px, transparent 77px 90px),
  linear-gradient(90deg, #060b07, #050a06 25%, #0c1a10 38%, #060806 50%, #040404 75%, #0a0808); }
.start { margin: 0 20px; }
.search { width: 430px; height: 50px; background: #333; display: flex; align-items: center; padding: 0 19px 0 11px; color: #a9a9a9; font-size: 16.2px; }
.search span { flex: 1; margin-left: 11px; padding-top: 1px; }
.tray { margin-left: 721px; }
.taskbar time { width: 94px; text-align: center; font-size: 14px; line-height: 23px; letter-spacing: -.1px; }
.notif { margin-left: 13px; }
.notif text { fill: #fff; font-size: 15px; text-anchor: middle; font-weight: 600; }
```
